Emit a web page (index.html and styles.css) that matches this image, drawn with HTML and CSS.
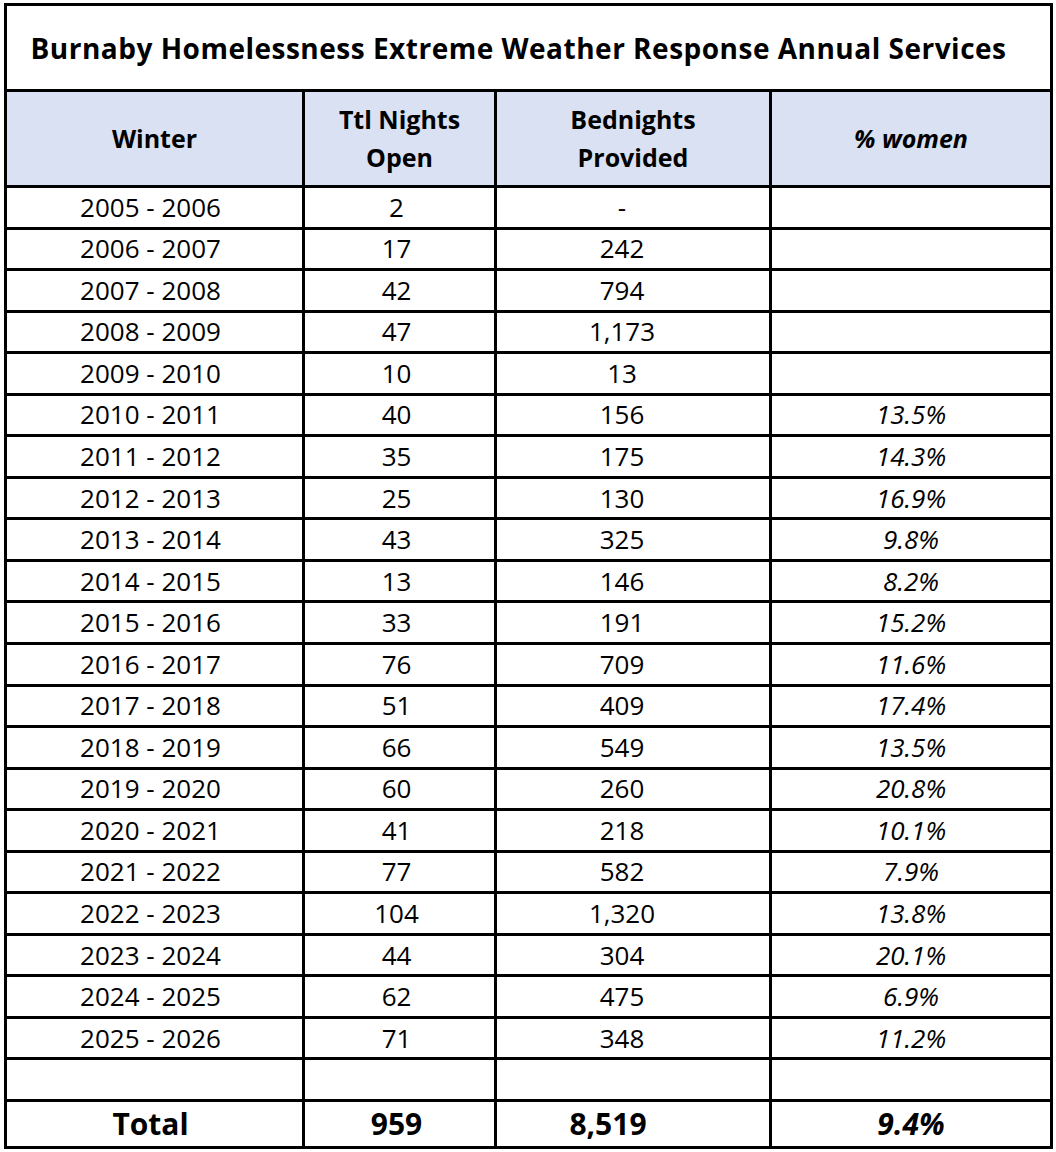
FILE: index.html
```html
<!DOCTYPE html>
<html lang="en">
<head>
<meta charset="utf-8">
<title>Burnaby Homelessness Extreme Weather Response Annual Services</title>
<link rel="stylesheet" href="styles.css">
</head>
<body>
<div class="sheet" role="table" aria-label="Burnaby Homelessness Extreme Weather Response Annual Services">
  <div class="cell title" role="caption">Burnaby Homelessness Extreme Weather Response Annual Services</div>

  <div class="cell head" role="columnheader">Winter</div>
  <div class="cell head" role="columnheader">Ttl Nights<br>Open</div>
  <div class="cell head" role="columnheader">Bednights<br>Provided</div>
  <div class="cell head pct" role="columnheader">% women</div>

  <div class="cell c1">2005 - 2006</div><div class="cell c2">2</div><div class="cell c3">-</div><div class="cell c4"></div>
  <div class="cell c1">2006 - 2007</div><div class="cell c2">17</div><div class="cell c3">242</div><div class="cell c4"></div>
  <div class="cell c1">2007 - 2008</div><div class="cell c2">42</div><div class="cell c3">794</div><div class="cell c4"></div>
  <div class="cell c1">2008 - 2009</div><div class="cell c2">47</div><div class="cell c3">1,173</div><div class="cell c4"></div>
  <div class="cell c1">2009 - 2010</div><div class="cell c2">10</div><div class="cell c3">13</div><div class="cell c4"></div>
  <div class="cell c1">2010 - 2011</div><div class="cell c2">40</div><div class="cell c3">156</div><div class="cell c4">13.5%</div>
  <div class="cell c1">2011 - 2012</div><div class="cell c2">35</div><div class="cell c3">175</div><div class="cell c4">14.3%</div>
  <div class="cell c1">2012 - 2013</div><div class="cell c2">25</div><div class="cell c3">130</div><div class="cell c4">16.9%</div>
  <div class="cell c1">2013 - 2014</div><div class="cell c2">43</div><div class="cell c3">325</div><div class="cell c4">9.8%</div>
  <div class="cell c1">2014 - 2015</div><div class="cell c2">13</div><div class="cell c3">146</div><div class="cell c4">8.2%</div>
  <div class="cell c1">2015 - 2016</div><div class="cell c2">33</div><div class="cell c3">191</div><div class="cell c4">15.2%</div>
  <div class="cell c1">2016 - 2017</div><div class="cell c2">76</div><div class="cell c3">709</div><div class="cell c4">11.6%</div>
  <div class="cell c1">2017 - 2018</div><div class="cell c2">51</div><div class="cell c3">409</div><div class="cell c4">17.4%</div>
  <div class="cell c1">2018 - 2019</div><div class="cell c2">66</div><div class="cell c3">549</div><div class="cell c4">13.5%</div>
  <div class="cell c1">2019 - 2020</div><div class="cell c2">60</div><div class="cell c3">260</div><div class="cell c4">20.8%</div>
  <div class="cell c1">2020 - 2021</div><div class="cell c2">41</div><div class="cell c3">218</div><div class="cell c4">10.1%</div>
  <div class="cell c1">2021 - 2022</div><div class="cell c2">77</div><div class="cell c3">582</div><div class="cell c4">7.9%</div>
  <div class="cell c1">2022 - 2023</div><div class="cell c2">104</div><div class="cell c3">1,320</div><div class="cell c4">13.8%</div>
  <div class="cell c1">2023 - 2024</div><div class="cell c2">44</div><div class="cell c3">304</div><div class="cell c4">20.1%</div>
  <div class="cell c1">2024 - 2025</div><div class="cell c2">62</div><div class="cell c3">475</div><div class="cell c4">6.9%</div>
  <div class="cell c1">2025 - 2026</div><div class="cell c2">71</div><div class="cell c3">348</div><div class="cell c4">11.2%</div>

  <div class="cell c1"></div><div class="cell c2"></div><div class="cell c3"></div><div class="cell c4"></div>

  <div class="cell c1 total">Total</div><div class="cell c2 total">959</div><div class="cell c3 total t3">8,519</div><div class="cell c4 total">9.4%</div>
</div>
</body>
</html>
```

FILE: styles.css
```css
* {
  box-sizing: border-box;
}

html, body {
  margin: 0;
  padding: 0;
  background: #ffffff;
}

body {
  font-family: "Open Sans", Lato, "Liberation Sans", sans-serif;
  color: #000000;
}

.sheet {
  display: grid;
  grid-template-columns: 298px 192px 275px 281px;
  grid-template-rows: 86px 96px repeat(22, 41.55px) 47px;
  width: 1049px;
  margin: 3px 0 0 4px;
  border-left: 3px solid #000;
  border-top: 3px solid #000;
}

.cell {
  display: flex;
  align-items: center;
  justify-content: center;
  text-align: center;
  border-right: 3px solid #000;
  border-bottom: 3px solid #000;
  font-size: 26px;
  line-height: 1.2;
  white-space: nowrap;
}

.title {
  grid-column: 1 / -1;
  font-weight: 700;
  font-size: 28px;
  letter-spacing: 0.5px;
  padding-right: 20px;
  padding-top: 2px;
}

.head {
  background: #d9e1f2;
  font-weight: 700;
  font-size: 25px;
  line-height: 1.5;
}

.pct {
  font-style: italic;
}

.c1 {
  padding-right: 8px;
}

.c2 {
  padding-right: 6px;
}

.c3 {
  padding-right: 22px;
}

.c4 {
  font-style: italic;
}

.total {
  font-weight: 700;
  font-size: 30px;
}

.t3 {
  padding-right: 50px;
}
```
